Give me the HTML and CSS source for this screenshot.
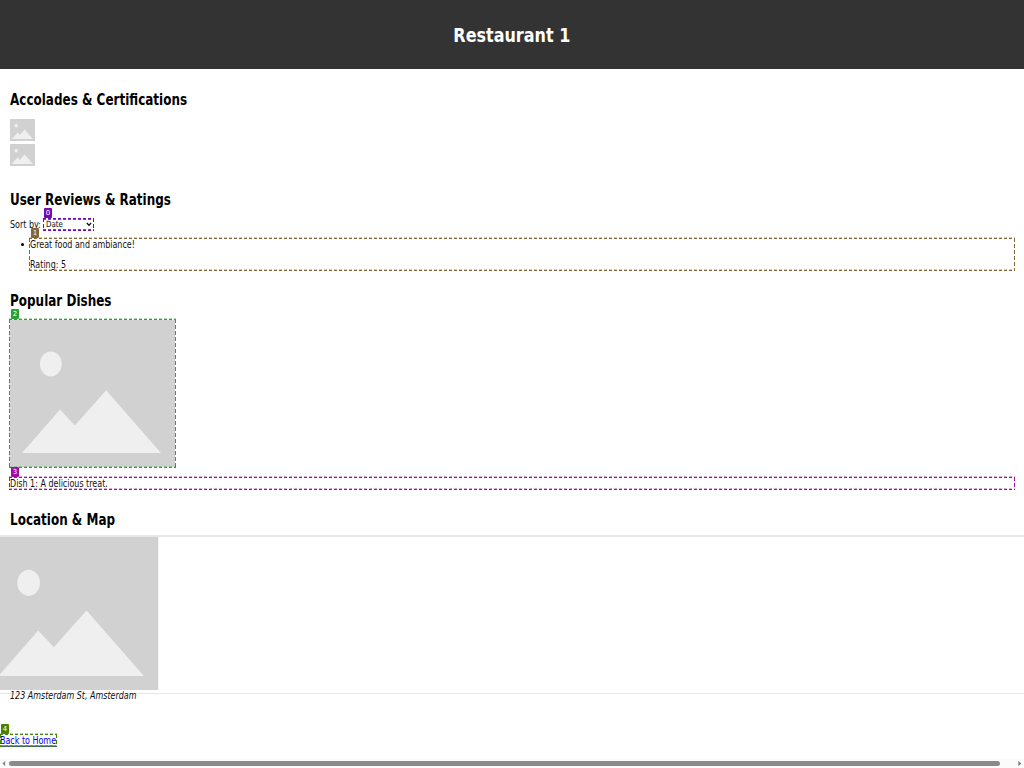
FILE: index.html
```html
<!DOCTYPE html>
<html lang="en">
<head>
<meta charset="utf-8">
<title>Restaurant 1</title>
<link rel="stylesheet" href="styles.css">
</head>
<body>
<svg class="defs" width="0" height="0">
  <symbol id="photo" viewBox="0 0 165 147" preserveAspectRatio="none">
    <rect width="165" height="147" fill="#d1d1d1"/>
    <ellipse cx="40.8" cy="43.9" rx="10.9" ry="12.5" fill="#efefef"/>
    <path d="M12 133 50 89.4 64.8 105.6 96.2 70.3 151 133Z" fill="#efefef"/>
  </symbol>
</svg>
<header class="header"><h1 class="title"><span>Restaurant 1</span></h1></header>
<main class="page">
  <section class="accolades">
    <h2 class="heading"><span>Accolades &amp; Certifications</span></h2>
    <div class="awards">
      <svg class="award"><use href="#photo"/></svg>
      <svg class="award"><use href="#photo"/></svg>
    </div>
  </section>
  <section class="reviews">
    <h2 class="heading"><span>User Reviews &amp; Ratings</span></h2>
    <div class="sort">
      <span class="sort-label"><span class="text">Sort by:</span></span>
      <div class="select marked violet"><b class="tag">0</b><span class="text">Date</span>
        <svg class="chevron" viewBox="0 0 6 5"><path d="M.9 1 3 3.4 5.1 1" fill="none" stroke="#000" stroke-width="1.2"/></svg>
      </div>
    </div>
    <div class="review marked brown"><b class="tag">1</b><i class="bullet"></i>
      <p class="line"><span class="text">Great food and ambiance!</span></p>
      <p class="line"><span class="text">Rating: 5</span></p>
    </div>
  </section>
  <section class="dishes">
    <h2 class="heading"><span>Popular Dishes</span></h2>
    <div class="dish marked green"><b class="tag">2</b><svg class="dish-photo"><use href="#photo"/></svg></div>
    <div class="caption marked purple"><b class="tag">3</b><span class="text">Dish 1: A delicious treat.</span></div>
  </section>
  <section class="location">
    <h2 class="heading"><span>Location &amp; Map</span></h2>
    <div class="map"><svg class="map-photo"><use href="#photo"/></svg></div>
    <address class="address"><span class="text">123 Amsterdam St, Amsterdam</span></address>
  </section>
  <a class="back marked olive" href="#"><b class="tag">4</b><span class="text">Back to Home</span></a>
</main>
<footer class="scrollbar">
  <svg class="arrow" viewBox="0 0 9 9"><path d="M5.2 2V7.2L2.4 4.6Z" fill="#888"/></svg>
  <div class="thumb"></div>
  <svg class="arrow" viewBox="0 0 9 9"><path d="M3.4 2V7.2L6.2 4.6Z" fill="#777"/></svg>
</footer>
</body>
</html>
```
FILE: styles.css
```css
* { box-sizing: border-box; }
body {
  margin: 0;
  width: 1024px;
  height: 768px;
  display: flex;
  flex-direction: column;
  overflow: hidden;
  background: #fff;
  color: #111;
  font: 9.17px/12px "DejaVu Sans", sans-serif;
}
.defs { display: block; flex: none; height: 0; }
.header {
  flex: none;
  height: 69px;
  display: flex;
  align-items: center;
  justify-content: center;
  background: #333;
  color: #fff;
}
.title { margin: 0; font-size: 18.3px; line-height: 22px; }
.title span { display: inline-block; transform: translateY(.5px) scale(.875, 1.06); }
.page { flex: 1; }
.heading { margin: 0; color: #000; font-size: 13.75px; line-height: 16px; height: 16px; }
.heading span,
.text {
  display: inline-block;
  white-space: nowrap;
  transform: translateY(1px) scale(.872, 1.15);
  transform-origin: 0 50%;
}
.heading span { transform: translateY(.6px) scale(.872, 1.14); }

.marked { position: relative; }
.marked::after {
  content: "";
  position: absolute;
  inset: 0;
  pointer-events: none;
  background:
    repeating-linear-gradient(90deg, var(--c) 0 3px, transparent 3px 5px) 0 0 / 100% 1px no-repeat,
    repeating-linear-gradient(90deg, var(--c) 0 3px, transparent 3px 5px) 0 100% / 100% 1px no-repeat,
    repeating-linear-gradient(180deg, var(--c) 0 4px, transparent 4px 6px) 0 0 / 1px 100% no-repeat,
    repeating-linear-gradient(180deg, var(--c) 0 4px, transparent 4px 6px) 100% 0 / 1px 100% no-repeat;
}
/* Faint second row that softens the horizontal dashes */
.marked::before {
  content: "";
  position: absolute;
  inset: -1px 0 1px;
  opacity: .35;
  pointer-events: none;
  background:
    repeating-linear-gradient(90deg, var(--c) 0 3px, transparent 3px 5px) 0 0 / 100% 1px no-repeat,
    repeating-linear-gradient(90deg, var(--c) 0 3px, transparent 3px 5px) 0 100% / 100% 1px no-repeat;
}
.violet { --c: #7509af; }
.violet::before { opacity: .8; inset: 0; background-size: 100% 2px; }
.brown { --c: #846836; }
.green { --c: #27a234; }
.purple { --c: #a00bab; }
.olive { --c: #438404; }
.tag {
  position: absolute;
  left: 2px;
  top: -10px;
  width: 8px;
  height: 10px;
  border-radius: 1px;
  background: var(--c);
  color: #fff;
  font: 7px/10px "DejaVu Sans", sans-serif;
  text-align: center;
}

.accolades { height: 114px; padding: 22px 10px 0; }
.awards { display: flex; flex-direction: column; gap: 2.5px; margin-top: 12.3px; }
.award { display: block; width: 25px; height: 22.2px; }

.reviews { height: 101px; padding: 8px 9px 0 10px; }
.sort { display: flex; height: 13px; margin-top: 11px; }
.sort-label { width: 33px; }
.select {
  display: flex;
  align-items: center;
  justify-content: space-between;
  width: 51px;
  height: 13px;
  padding: 0 2px 0 3px;
  font-size: 7.9px;
}
.select .text { transform: scale(.9, 1.1); }
.select .tag { left: 1px; }
.chevron { width: 6px; height: 5px; }
.review { height: 33px; margin: 7px 0 0 19px; padding: 0 1px; }
.bullet {
  position: absolute;
  left: -8px;
  top: 5px;
  width: 3px;
  height: 3px;
  border-radius: 50%;
  background: #000;
}
.line { margin: 0 0 8px; height: 12px; }

.dishes { height: 220px; padding: 8px 9px 0; }
.dishes .heading { padding-left: 1px; }
.dish { width: 167px; height: 149px; margin-top: 11px; padding: 1px; }
.dish-photo { display: block; width: 165px; height: 147px; }
.caption { height: 13px; margin-top: 9px; padding-left: 1px; }

.location { height: 230px; padding-top: 7px; }
.location .heading { padding-left: 10px; }
.map {
  height: 159px;
  margin-top: 8px;
  border: solid #e8e8e8;
  border-width: 2px 0 1px;
  overflow: hidden;
}
.map-photo { display: block; width: 172.5px; height: 153.6px; margin: -.5px 0 0 -14px; }
.address { margin-top: -5px; padding-left: 10px; height: 12px; }

.back { display: block; width: 57px; height: 13px; color: #00e; text-decoration: none; }
.back .text { text-decoration: underline; }
.back .tag { left: 1px; }

.scrollbar {
  flex: none;
  height: 9px;
  display: flex;
  align-items: center;
  background: #fbfbfb;
}
.arrow { width: 9px; height: 9px; }
.thumb { width: 991px; height: 5.5px; margin-right: 15px; border-radius: 3px; background: #8b8b8b; }
```
